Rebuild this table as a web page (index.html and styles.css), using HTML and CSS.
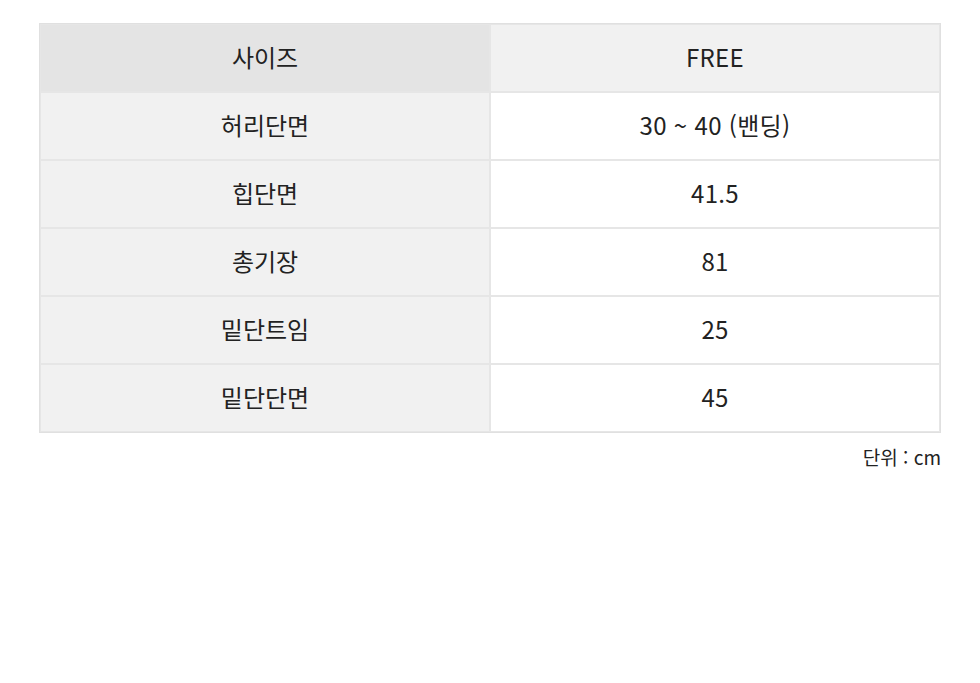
FILE: index.html
```html
<!DOCTYPE html>
<html lang="ko">
<head>
<meta charset="utf-8">
<link rel="stylesheet" href="styles.css">
</head>
<body>
<div class="wrap">
  <table class="size-table">
    <tr class="head">
      <th class="label">사이즈</th>
      <th class="value">FREE</th>
    </tr>
    <tr><td class="label">허리단면</td><td class="value">30 ~ 40 (밴딩)</td></tr>
    <tr><td class="label">힙단면</td><td class="value">41.5</td></tr>
    <tr><td class="label">총기장</td><td class="value">81</td></tr>
    <tr><td class="label">밑단트임</td><td class="value">25</td></tr>
    <tr><td class="label">밑단단면</td><td class="value">45</td></tr>
  </table>
  <p class="unit">단위 : cm</p>
</div>
</body>
</html>
```

FILE: styles.css
```css
html, body {
  margin: 0;
  padding: 0;
  background: #fff;
}
body {
  font-family: "Noto Sans CJK KR", "Noto Sans", sans-serif;
  color: #222;
}
.wrap {
  padding: 23px 39px 0 39px;
}
.size-table {
  width: 902px;
  border-collapse: separate;
  border-spacing: 0;
  border: 1px solid #e0e0e0;
  table-layout: fixed;
}
.size-table th,
.size-table td {
  border: 1px solid #e6e6e6;
  height: 63px;
  padding: 0 0 3px 0;
  text-align: center;
  font-size: 24px;
  font-weight: 400;
  color: #222;
  width: 50%;
}
.size-table td.value,
.size-table th.value {
  letter-spacing: 0.3px;
}
.size-table td.label {
  background: #f1f1f1;
}
.size-table td.value {
  background: #fff;
}
.size-table th.label {
  background: #e4e4e4;
}
.size-table th.value {
  background: #f1f1f1;
}
.unit {
  margin: 10px 0 0 0;
  text-align: right;
  font-size: 19px;
  color: #222;
}
```
